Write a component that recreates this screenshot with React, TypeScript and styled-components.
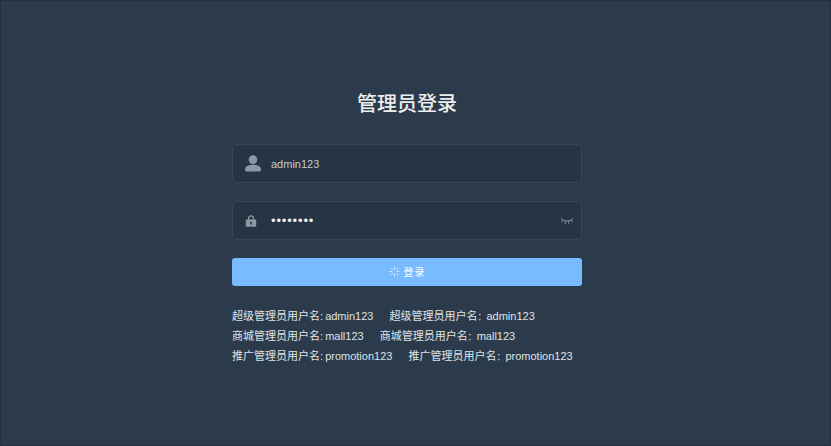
import React from "react";
import styled, { createGlobalStyle } from "styled-components";

const Global = createGlobalStyle`
  html, body { margin: 0; padding: 0; background: #2c3b4c; }
  body { font-family: "Liberation Sans", "Noto Sans CJK SC", sans-serif; }
`;

const Page = styled.div`
  width: 831px;
  height: 446px;
  box-sizing: border-box;
  background: #2c3b4c;
  border: 1px solid #243040;
  padding-left: 231px;
  overflow: hidden;
`;

const Form = styled.form`
  width: 350px;
  padding-top: 88px;
  display: flex;
  flex-direction: column;
`;

const Title = styled.h3`
  margin: 0 0 27px;
  height: 28px;
  line-height: 28px;
  font-size: 20px;
  font-weight: 500;
  text-align: center;
  color: #eeeeee;
  font-family: "Noto Sans CJK SC", sans-serif;
`;

const Field = styled.div`
  height: 37px;
  margin-bottom: 18px;
  width: 348px;
  border: 1px solid rgba(255, 255, 255, 0.09);
  border-radius: 5px;
  background: #263443;
  display: flex;
  align-items: center;
`;

const IconSlot = styled.span`
  width: 38px;
  box-sizing: border-box;
  padding-left: 12px;
  flex: none;
  display: flex;
  color: #889aa4;
`;

const Value = styled.span<{ $secret?: boolean }>`
  flex: 1;
  font-family: "Liberation Sans", sans-serif;
  font-size: ${(p) => (p.$secret ? "13px" : "11px")};
  letter-spacing: ${(p) => (p.$secret ? "0.85px" : "0")};
  color: ${(p) => (p.$secret ? "#eeeeee" : "#c5cad0")};
`;

const Eye = styled.span`
  width: 28px;
  display: flex;
  justify-content: center;
  color: #889aa4;
`;

const LoginButton = styled.button`
  height: 28px;
  width: 350px;
  margin-bottom: 20px;
  border: none;
  border-radius: 3px;
  background: #79bbff;
  color: #ffffff;
  font-size: 10px;
  line-height: 12px;
  letter-spacing: 1px;
  font-family: "Noto Sans CJK SC", sans-serif;
  display: flex;
  align-items: center;
  justify-content: center;
  gap: 4px;
  padding: 0 0 1px;
`;

const SpinnerWrap = styled.span`
  display: flex;
  opacity: 0.75;
`;

const Tips = styled.div`
  display: flex;
  flex-direction: column;
`;

const TipRow = styled.div`
  display: flex;
  gap: 16px;
  height: 20px;
  line-height: 20px;
  font-size: 11px;
  color: #dfe3e7;
  white-space: nowrap;
  word-spacing: -1px;
  font-family: "Liberation Sans", "Noto Sans CJK SC", sans-serif;
`;

const Colon = styled.span`
  font-size: 9px;
`;

const UserIcon = () => (
  <svg width="16" height="17" viewBox="0 0 16 17" fill="currentColor">
    <circle cx="8" cy="4.600" r="4.300" />
    <path d="M0 14.800c0-3.400 3-5 8-5s8 1.600 8 5c0 1-.6 1.600-1.600 1.600H1.600C.6 16.400 0 15.800 0 14.800z" />
  </svg>
);

const LockIcon = () => (
  <svg width="12" height="12" viewBox="0 0 12 12" fill="currentColor">
    <path fillRule="evenodd" d="M3 4.500V3.300a3 3 0 0 1 6 0v1.200h1.200c.6 0 1 .4 1 1v5.300c0 .6-.4 1-1 1H1.800c-.6 0-1-.4-1-1V5.500c0-.6.4-1 1-1H3zm1.300 0h3.400V3.300a1.700 1.700 0 0 0-3.400 0v1.200zM6 6.800a1 1 0 0 0-.5 1.900v1h1v-1A1 1 0 0 0 6 6.800z" />
  </svg>
);

const EyeOffIcon = () => (
  <svg width="14" height="9" viewBox="0 0 14 9" fill="none" stroke="currentColor" strokeWidth="1">
    <path d="M1 2.500C4 5.800 10 5.800 13 2.500" />
    <path d="M2.800 4.200L1.500 6M5.500 5.200L5 7.800M8.500 5.200L9 7.800M11.200 4.200L12.500 6" />
  </svg>
);

const Spinner = () => (
  <svg width="11" height="11" viewBox="0 0 12 12" fill="none" stroke="#ffffff" strokeWidth="1" strokeLinecap="round">
    <path d="M6 .8v2.400M6 8.800v2.400M.8 6h2.400M8.800 6h2.400M2.300 2.300L4 4M8 8l1.700 1.700M2.300 9.700L4 8M8 4l1.700-1.700" />
  </svg>
);

const tips = [
  ["超级管理员用户名", "admin123"],
  ["商城管理员用户名", "mall123"],
  ["推广管理员用户名", "promotion123"],
];

export default function App() {
  return (
    <Page>
      <Global />
      <Form>
        <Title>管理员登录</Title>
        <Field>
          <IconSlot><UserIcon /></IconSlot>
          <Value>admin123</Value>
        </Field>
        <Field>
          <IconSlot><LockIcon /></IconSlot>
          <Value $secret>••••••••</Value>
          <Eye><EyeOffIcon /></Eye>
        </Field>
        <LoginButton type="button"><SpinnerWrap><Spinner /></SpinnerWrap>登录</LoginButton>
        <Tips>
          {tips.map(([label, name]) => (
            <TipRow key={label}>
              <span>{label}: {name}</span>
              <span>{label}<Colon>：</Colon>{name}</span>
            </TipRow>
          ))}
        </Tips>
      </Form>
    </Page>
  );
}
